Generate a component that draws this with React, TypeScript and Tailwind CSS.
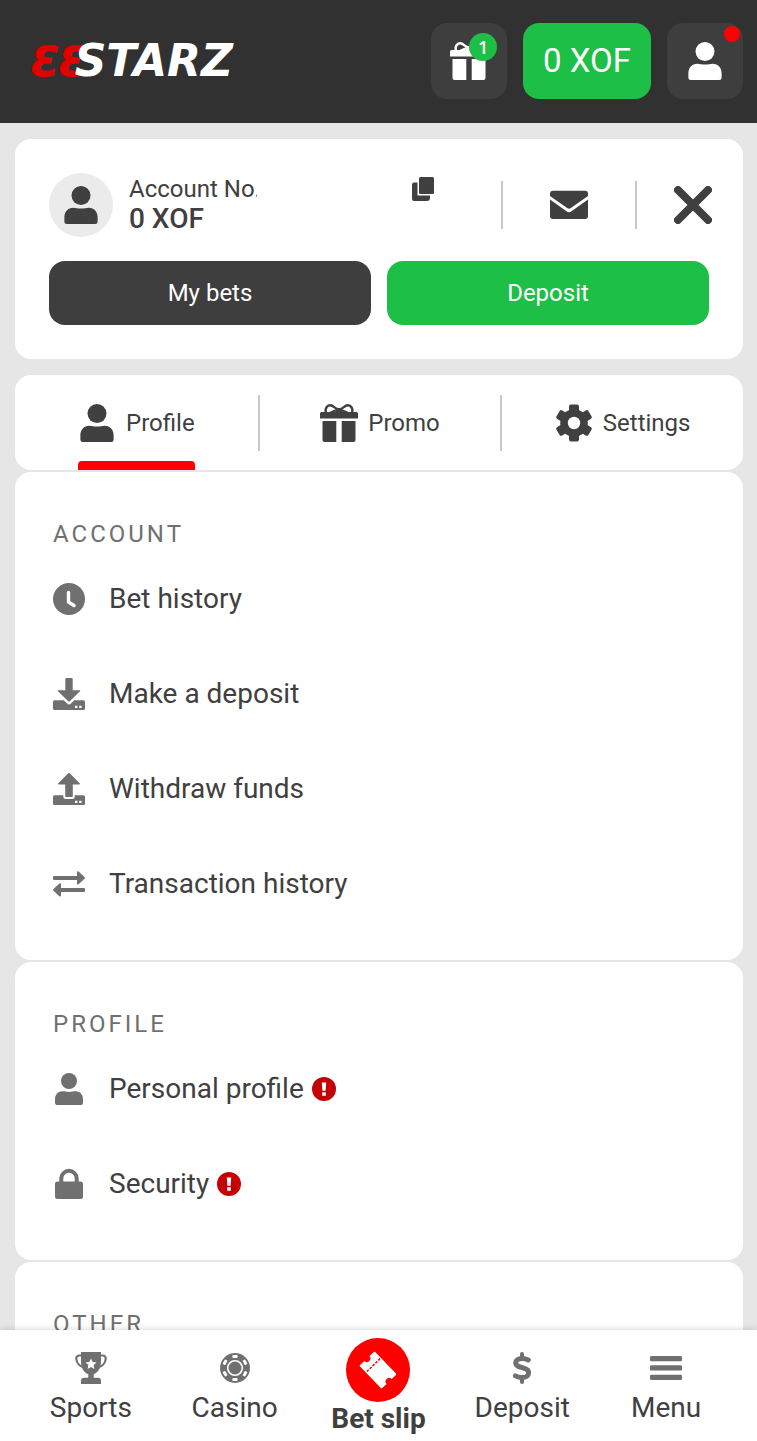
import React from 'react';

type IconProps = { className?: string };

const UserIcon: React.FC<IconProps> = ({ className }) => (
  <svg viewBox="0 0 32 32" fill="currentColor" className={className} aria-hidden="true">
    <circle cx="16" cy="8" r="8" />
    <path d="M2 26.500C2 21.500 5 18.300 9.500 18.300c2.500 0 3.500.7 6.500.7s4-.7 6.500-.7c4.500 0 7.500 3.200 7.500 8.200V30a2 2 0 0 1-2 2H4a2 2 0 0 1-2-2z" />
  </svg>
);

const GiftIcon: React.FC<IconProps> = ({ className }) => (
  <svg viewBox="0 0 38 38" fill="currentColor" className={className} aria-hidden="true">
    <path d="M6 9C4.500 4 7.500 1.300 10.500 1.300c3 0 4.500 4 8.500 4s5.500-4 8.500-4C30.500 1.300 33.500 4 32 9M10 9c2-1 5-3 9-3s7 2 9 3" fill="none" stroke="currentColor" strokeWidth="2.400" />
    <path d="M16 4.500h6V9h-6z" />
    <path d="M1.500 8h35A1.500 1.500 0 0 1 38 9.500v5H0v-5A1.500 1.500 0 0 1 1.500 8z" />
    <path d="M2.500 17h13.800v21H4.500a2 2 0 0 1-2-2zM21.700 17h13.800v19a2 2 0 0 1-2 2H21.700z" />
  </svg>
);

const GearIcon: React.FC<IconProps> = ({ className }) => (
  <svg viewBox="0 0 38 38" fill="currentColor" className={className} aria-hidden="true">
    <mask id="gear-hole">
      <rect width="38" height="38" fill="#fff" />
      <circle cx="19" cy="19" r="6.200" fill="#000" />
    </mask>
    <g mask="url(#gear-hole)">
      <circle cx="19" cy="19" r="13.800" />
      {[0, 60, 120].map(angle => (
        <rect key={angle} x="14" y="0.500" width="10" height="37" rx="2" transform={`rotate(${angle} 19 19)`} />
      ))}
    </g>
  </svg>
);

const CopyIcon: React.FC<IconProps> = ({ className }) => (
  <svg viewBox="0 0 24 24" fill="currentColor" className={className} aria-hidden="true">
    <rect x="8" y="0" width="15" height="17" rx="1.500" />
    <path d="M3 5.500h3.500v13h12.500v2.500a3 3 0 0 1-3 3H3a2 2 0 0 1-2-2v-14.500a2 2 0 0 1 2-2z" />
  </svg>
);

const MailIcon: React.FC<IconProps> = ({ className }) => (
  <svg viewBox="0 0 38 30" fill="currentColor" className={className} aria-hidden="true">
    <path d="M3 .8h32a3 3 0 0 1 3 3v2.200L20.500 18.300a2.800 2.800 0 0 1-3 0L0 6V3.800a3 3 0 0 1 3-3z" />
    <path d="M0 9.500l16.800 12a4 4 0 0 0 4.400 0L38 9.500V26a3 3 0 0 1-3 3H3a3 3 0 0 1-3-3z" />
  </svg>
);

const CloseIcon: React.FC<IconProps> = ({ className }) => (
  <svg viewBox="0 0 38 38" className={className} aria-hidden="true">
    <path d="M4 4l30 30M34 4L4 34" stroke="currentColor" strokeWidth="8" strokeLinecap="round" />
  </svg>
);

const ClockIcon: React.FC<IconProps> = ({ className }) => (
  <svg viewBox="0 0 32 32" className={className} aria-hidden="true">
    <circle cx="16" cy="16" r="16" fill="currentColor" />
    <path d="M15.500 9.500v9.500l5.500 3.500" fill="none" stroke="#fff" strokeWidth="3.400" strokeLinecap="round" strokeLinejoin="round" />
  </svg>
);

const DepositIcon: React.FC<IconProps> = ({ className }) => (
  <svg viewBox="0 0 32 32" fill="currentColor" className={className} aria-hidden="true">
    <path d="M13.300 0h5.400a1 1 0 0 1 1 1v11.200h6.800c.8 0 1 .6.500 1.100L17 23a1.400 1.400 0 0 1-2 0L5 13.300c-.5-.5-.3-1.100.5-1.100h6.800V1a1 1 0 0 1 1-1z" />
    <path d="M1.500 22.300h9.300l3 3a3 3 0 0 0 4.400 0l3-3h9.300A1.500 1.500 0 0 1 32 23.800v6.700a1.500 1.500 0 0 1-1.500 1.500h-29A1.500 1.500 0 0 1 0 30.500v-6.700a1.500 1.500 0 0 1 1.500-1.500z" />
    <path d="M22 27.700h2.400v2.400H22zM26.200 27.700h2.400v2.400h-2.400z" fill="#fff" />
  </svg>
);

const WithdrawIcon: React.FC<IconProps> = ({ className }) => (
  <svg viewBox="0 0 32 32" fill="currentColor" className={className} aria-hidden="true">
    <path d="M15 .5a1.400 1.400 0 0 1 2 0l9.700 9.700c.5.500.3 1.300-.5 1.300h-6.400V23a1 1 0 0 1-1 1h-5.600a1 1 0 0 1-1-1V11.500H5.800c-.8 0-1-.8-.5-1.300z" />
    <path d="M1.500 22.300h8.800v1.200a2.500 2.500 0 0 0 2.500 2.500h6.400a2.500 2.500 0 0 0 2.500-2.500v-1.200h8.800A1.500 1.500 0 0 1 32 23.800v6.700a1.500 1.500 0 0 1-1.500 1.500h-29A1.500 1.500 0 0 1 0 30.500v-6.700a1.500 1.500 0 0 1 1.500-1.500z" />
    <path d="M22 27.700h2.400v2.400H22zM26.200 27.700h2.400v2.400h-2.400z" fill="#fff" />
  </svg>
);

const TransferIcon: React.FC<IconProps> = ({ className }) => (
  <svg viewBox="0 0 32 32" fill="currentColor" className={className} aria-hidden="true">
    <path d="M1 8h23V4.300c0-1 .9-1.300 1.600-.7l5.900 5.500c.6.500.6 1.200 0 1.700l-5.900 5.500c-.7.600-1.600.3-1.600-.7V12H1a1 1 0 0 1-1-1V9a1 1 0 0 1 1-1z" />
    <path d="M31 20H8v-3.700c0-1-.9-1.300-1.600-.7L.5 21.100c-.6.500-.6 1.200 0 1.700l5.900 5.500c.7.600 1.600.3 1.600-.7V24h23a1 1 0 0 0 1-1v-2a1 1 0 0 0-1-1z" />
  </svg>
);

const LockIcon: React.FC<IconProps> = ({ className }) => (
  <svg viewBox="0 0 32 32" className={className} aria-hidden="true">
    <path d="M8.300 14V10.500a7.700 7.700 0 0 1 15.400 0V14" fill="none" stroke="currentColor" strokeWidth="4" />
    <rect x="2" y="13.500" width="28" height="17.500" rx="2.500" fill="currentColor" />
  </svg>
);

const AlertIcon: React.FC<IconProps> = ({ className }) => (
  <svg viewBox="0 0 24 24" className={className} role="img" aria-label="Action required">
    <circle cx="12" cy="12" r="12" fill="#c40306" />
    <path d="M9.800 5.500h4.400l-.6 8.200h-3.200zM10.200 15.200h3.600v3.500h-3.600z" fill="#fff" />
  </svg>
);

const TrophyIcon: React.FC<IconProps> = ({ className }) => (
  <svg viewBox="0 0 32 32" fill="currentColor" className={className} aria-hidden="true">
    <path d="M8 3.500H4.500A3 3 0 0 0 1.300 7C1.600 11 5 14.500 9.500 15.500M24 3.500h3.500A3 3 0 0 1 30.700 7C30.400 11 27 14.500 22.500 15.500" fill="none" stroke="currentColor" strokeWidth="2.200" />
    <path d="M6 0h20v9.500c0 6.500-3 11-7.300 12.800v3.500H23a3 3 0 0 1 3 3V32H6v-3.200a3 3 0 0 1 3-3h4.300v-3.500C9 20.500 6 16 6 9.500z" />
    <path d="M16 6.500l1.600 3.600 3.900.4-2.900 2.600.8 3.900-3.400-2-3.400 2 .8-3.900-2.900-2.600 3.900-.4z" fill="#fff" />
  </svg>
);

const ChipIcon: React.FC<IconProps> = ({ className }) => (
  <svg viewBox="0 0 32 32" className={className} aria-hidden="true">
    <circle cx="16" cy="16" r="15" fill="currentColor" />
    <circle cx="16" cy="16" r="7.300" fill="none" stroke="#fff" strokeWidth="1.600" />
    {[0, 60, 120, 180, 240, 300].map(angle => (
      <rect key={angle} x="13.400" y="3" width="5.200" height="3" rx="1" fill="#fff" transform={`rotate(${angle} 16 16)`} />
    ))}
  </svg>
);

const DollarIcon: React.FC<IconProps> = ({ className }) => (
  <svg viewBox="0 0 32 32" fill="none" stroke="currentColor" className={className} aria-hidden="true">
    <path d="M16 2v5M16 25v5" strokeWidth="4" strokeLinecap="round" />
    <path d="M22.300 8C20.500 7.100 18 6.500 15.900 6.500c-3.900 0-6.200 1.700-6.200 4.300 0 6 12.900 3.800 12.900 9.900 0 3-2.600 4.800-6.500 4.800-2.600 0-4.800-.6-6.700-1.600" strokeWidth="5" strokeLinecap="round" />
  </svg>
);

const MenuIcon: React.FC<IconProps> = ({ className }) => (
  <svg viewBox="0 0 32 32" fill="currentColor" className={className} aria-hidden="true">
    <rect y="4" width="32" height="5.300" rx="1.200" />
    <rect y="13.300" width="32" height="5.300" rx="1.200" />
    <rect y="22.700" width="32" height="5.300" rx="1.200" />
  </svg>
);

const BetSlipIcon: React.FC<IconProps> = ({ className }) => (
  <svg viewBox="0 0 64 64" className={className} aria-hidden="true">
    <circle cx="32" cy="32" r="32" fill="#fe0000" />
    <g transform="rotate(46 32 32)">
      <path d="M17 21.500h30a1 1 0 0 1 1 1v6a3.500 3.500 0 0 0 0 7v6a1 1 0 0 1-1 1H17a1 1 0 0 1-1-1v-6a3.500 3.500 0 0 0 0-7v-6a1 1 0 0 1 1-1z" fill="#fff" />
      <path d="M25.300 22.500v20" stroke="#fe0000" strokeWidth="1.500" strokeDasharray="2.600 1.400" />
    </g>
  </svg>
);

type MenuItem = { label: string; icon: React.FC<IconProps>; alert?: boolean };

const sections: { title: string; items: MenuItem[] }[] = [
  {
    title: 'ACCOUNT',
    items: [
      { label: 'Bet history', icon: ClockIcon },
      { label: 'Make a deposit', icon: DepositIcon },
      { label: 'Withdraw funds', icon: WithdrawIcon },
      { label: 'Transaction history', icon: TransferIcon }
    ]
  },
  {
    title: 'PROFILE',
    items: [
      { label: 'Personal profile', icon: UserIcon, alert: true },
      { label: 'Security', icon: LockIcon, alert: true }
    ]
  },
  { title: 'OTHER', items: [] }
];

const tabs = [
  { label: 'Profile', icon: UserIcon, active: true },
  { label: 'Promo', icon: GiftIcon, active: false },
  { label: 'Settings', icon: GearIcon, active: false }
];

const navItems = [
  { label: 'Sports', icon: TrophyIcon },
  { label: 'Casino', icon: ChipIcon },
  { label: 'Bet slip', icon: BetSlipIcon, main: true },
  { label: 'Deposit', icon: DollarIcon },
  { label: 'Menu', icon: MenuIcon }
];

const Header: React.FC = () => (
  <header className="flex shrink-0 items-center justify-between bg-[#313131] pt-[23px] pb-6 pl-[31px] pr-[14px]">
    <a href="#" className="flex items-baseline font-['DejaVu_Sans'] text-[44px] leading-none font-bold italic text-white">
      <span className="-mr-3 text-[40px] leading-none text-[#e00000] [-webkit-text-stroke:1px_#e00000]">ƐƐ</span>
      <span className="relative">STARZ</span>
    </a>
    <div className="flex gap-4">
      <button aria-label="Bonuses" className="relative flex size-[76px] items-center justify-center rounded-2xl bg-[#3e3e3e] text-white">
        <GiftIcon className="size-[38px]" />
        <span className="absolute top-[10px] right-[10px] flex size-7 items-center justify-center rounded-full bg-[#1dbf47] font-['Open_Sans'] text-lg font-semibold">1</span>
      </button>
      <button className="h-[76px] rounded-2xl bg-[#1dbf47] px-5 text-[33px] text-white">0 XOF</button>
      <button aria-label="My account" className="relative flex size-[76px] items-center justify-center rounded-2xl bg-[#3e3e3e] text-white">
        <UserIcon className="size-[38px]" />
        <span className="absolute top-[3px] right-[3px] size-4 rounded-full bg-[#fe0000]" />
      </button>
    </div>
  </header>
);

const AccountCard: React.FC = () => (
  <section className="rounded-2xl bg-white p-[34px]">
    <div className="flex h-16 items-center">
      <div className="flex size-16 shrink-0 items-center justify-center rounded-full bg-[#ebebeb]">
        <UserIcon className="size-[38px]" />
      </div>
      <div className="ml-4 w-32 self-start">
        <p className="overflow-hidden text-2xl leading-8 whitespace-nowrap">Account No.</p>
        <p className="text-[28px] leading-7 font-medium">0 XOF</p>
      </div>
      <button aria-label="Copy account number" className="ml-auto self-start pt-1">
        <CopyIcon className="size-6" />
      </button>
      <div className="ml-[66px] h-12 w-0.5 bg-[#c9c9c9]" />
      <button aria-label="Messages" className="px-[47px]">
        <MailIcon className="w-[38px]" />
      </button>
      <div className="h-12 w-0.5 bg-[#c9c9c9]" />
      <button aria-label="Close" className="-mr-[3px] ml-[37px]">
        <CloseIcon className="size-[38px]" />
      </button>
    </div>
    <div className="mt-6 flex gap-4 text-2xl text-white">
      <button className="h-16 flex-1 rounded-2xl bg-[#3e3e3e]">My bets</button>
      <button className="h-16 flex-1 rounded-2xl bg-[#1dbf47]">Deposit</button>
    </div>
  </section>
);

const Tabs: React.FC = () => (
  <div role="tablist" className="mt-4 grid h-[95px] grid-cols-3 items-center rounded-2xl bg-white text-2xl">
    {tabs.map(tab => (
      <div key={tab.label} className="flex h-14 items-center justify-center border-l-2 border-[#c9c9c9] first:border-l-0">
        <button role="tab" aria-selected={tab.active} className="relative flex h-[95px] items-center gap-[10px]">
          <tab.icon className="size-[38px]" />
          <span>{tab.label}</span>
          {tab.active && <span className="absolute inset-x-0 bottom-0 h-[9px] rounded-t bg-[#fe0000]" />}
        </button>
      </div>
    ))}
  </div>
);

export default function App() {
  return (
    <div className="flex h-screen flex-col bg-[#e6e6e6] font-[Roboto,sans-serif] text-[#404040]">
      <Header />

      <main className="min-h-0 flex-1 overflow-y-auto pt-4 pr-[14px] pl-[15px] [scrollbar-width:none]">
        <AccountCard />
        <Tabs />

        {/* Menu groups */}
        {sections.map(section => (
          <section key={section.title} className="mt-0.5 rounded-2xl bg-white px-[38px] pt-[45px] pb-[29px]">
            <h2 className="text-2xl leading-[34px] tracking-[3px] text-[#707070]">{section.title}</h2>
            <ul>
              {section.items.map(item => (
                <li key={item.label}>
                  <a href="#" className="flex h-[95px] items-center text-[28px]">
                    <item.icon className="mr-6 size-8 text-[#707070]" />
                    {item.label}
                    {item.alert && <AlertIcon className="ml-2 size-6" />}
                  </a>
                </li>
              ))}
            </ul>
          </section>
        ))}
      </main>

      <nav className="relative grid h-[111px] shrink-0 grid-cols-5 bg-white px-[19px] text-[28px] leading-8 shadow-[0_-1px_6px_rgba(0,0,0,0.15)]">
        {navItems.map(item =>
          item.main ? (
            <a key={item.label} href="#" className="flex flex-col items-center gap-px pt-2 font-bold">
              <item.icon className="size-16" />
              <span>{item.label}</span>
            </a>
          ) : (
            <a key={item.label} href="#" className="flex flex-col items-center gap-2 pt-[22px]">
              <item.icon className="size-8 text-[#707070]" />
              <span>{item.label}</span>
            </a>
          )
        )}
      </nav>
    </div>
  );
}
